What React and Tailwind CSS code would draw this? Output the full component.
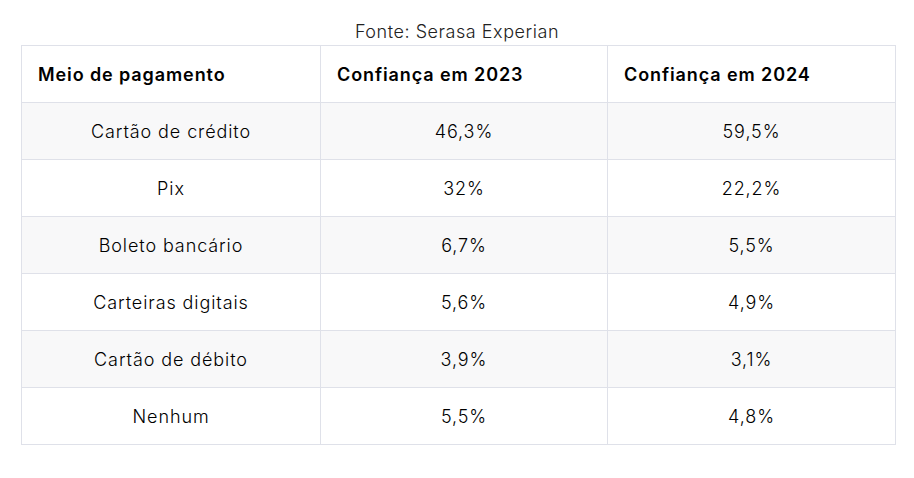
const rows = [
  ["Cartão de crédito", "46,3%", "59,5%"],
  ["Pix", "32%", "22,2%"],
  ["Boleto bancário", "6,7%", "5,5%"],
  ["Carteiras digitais", "5,6%", "4,9%"],
  ["Cartão de débito", "3,9%", "3,1%"],
  ["Nenhum", "5,5%", "4,8%"],
];

export default function App() {
  return (
    <div className="bg-white w-[914px] h-[478px] pt-[20px] font-['Inter','Liberation_Sans',sans-serif] text-black">
      <p className="text-center text-[18px] leading-[24px] font-light tracking-[0.03em] text-[#222]">Fonte: Serasa Experian</p>
      <table className="ml-[21px] w-[874px] table-fixed border-collapse mt-[1px]">
        <colgroup>
          <col className="w-[299px]" />
          <col className="w-[287px]" />
          <col className="w-[288px]" />
        </colgroup>
        <thead>
          <tr className="h-[57px]">
            <th className="border border-[#dfe1e9] text-left px-[16px] text-[18px] font-semibold tracking-[0.05em]">Meio de pagamento</th>
            <th className="border border-[#dfe1e9] text-left px-[16px] text-[18px] font-semibold tracking-[0.05em]">Confiança em 2023</th>
            <th className="border border-[#dfe1e9] text-left px-[16px] text-[18px] font-semibold tracking-[0.05em]">Confiança em 2024</th>
          </tr>
        </thead>
        <tbody>
          {rows.map((r, i) => (
            <tr key={r[0]} className={`h-[57px] ${i % 2 === 0 ? "bg-[#f8f8f9]" : "bg-white"}`}>
              {r.map((c, j) => (
                <td key={j} className="border border-[#dfe1e9] text-center text-[18px] font-light tracking-[0.05em]">{c}</td>
              ))}
            </tr>
          ))}
        </tbody>
      </table>
    </div>
  );
}
